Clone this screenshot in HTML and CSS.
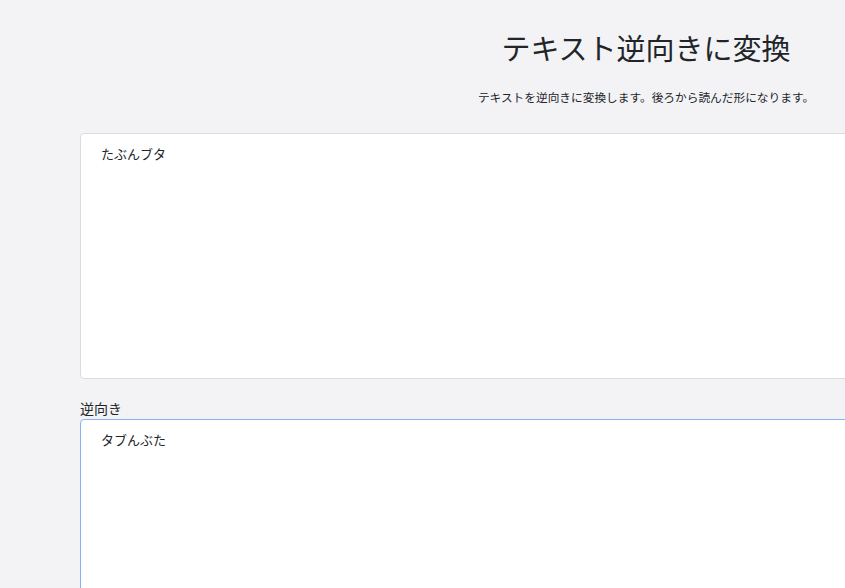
FILE: index.html
```html
<!DOCTYPE html>
<html lang="ja">
<head>
  <meta charset="utf-8">
  <title>テキスト逆向きに変換</title>
  <link rel="stylesheet" href="styles.css">
</head>
<body>
  <div class="page">
    <div class="container">
      <h1 class="title">テキスト逆向きに変換</h1>
      <p class="lead">テキストを逆向きに変換します。後ろから読んだ形になります。</p>

      <textarea class="box" id="source">たぶんブタ</textarea>

      <label class="label" for="result">逆向き</label>
      <textarea class="box focused" id="result">タブんぶた</textarea>
    </div>
  </div>
</body>
</html>
```

FILE: styles.css
```css
html, body {
  margin: 0;
  padding: 0;
  background: #f3f3f5;
}

body {
  font-family: "Noto Sans CJK JP", "Noto Sans", sans-serif;
  color: #212529;
}

.page {
  overflow: hidden;
  height: 588px;
  padding: 30px 0 0 80px;
  box-sizing: border-box;
}

.container {
  width: 1132px;
}

.title {
  margin: 0;
  text-align: center;
  font-size: 29px;
  font-weight: 400;
  line-height: 34px;
}

.lead {
  margin: 24px 0 28px;
  text-align: center;
  font-size: 11.7px;
  line-height: 17px;
}

.box {
  display: block;
  width: 100%;
  height: 246px;
  box-sizing: border-box;
  margin: 0;
  padding: 10px 20px;
  border: 1px solid #dcdce0;
  border-radius: 4px;
  background: #fff;
  color: #212529;
  font-family: "Noto Sans CJK JP", "Noto Sans", sans-serif;
  font-size: 13px;
  line-height: 20px;
  resize: none;
  outline: none;
}

.box.focused {
  border-color: #86b3f7;
}

.label {
  display: block;
  margin-top: 19px;
  font-size: 14px;
  line-height: 21px;
}
```
